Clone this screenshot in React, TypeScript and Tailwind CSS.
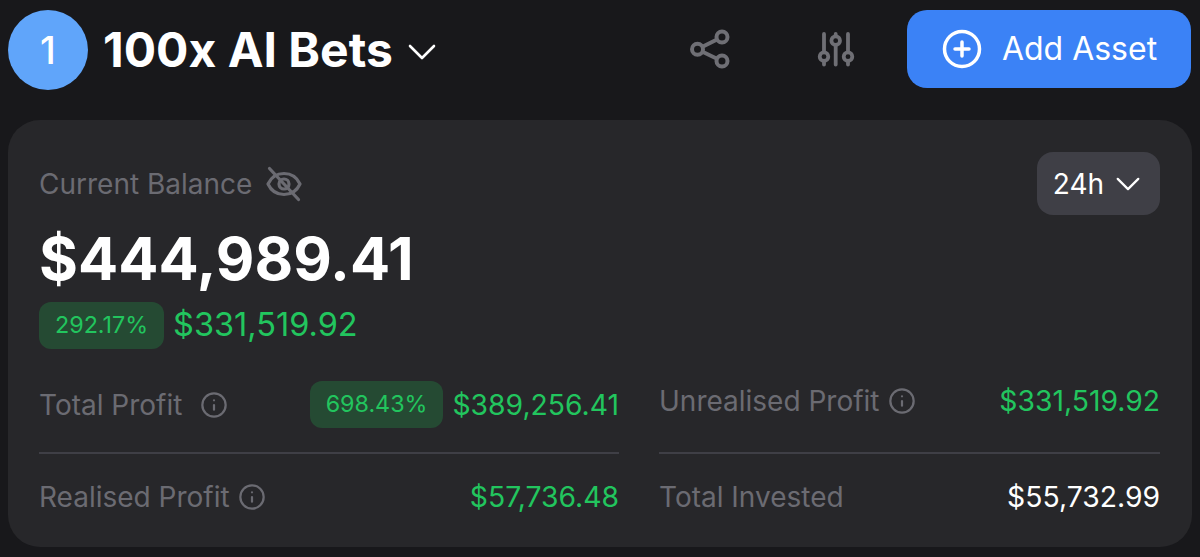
import { CirclePlus, Info } from "lucide-react";

const FONT = "font-['Inter',sans-serif]";

function Chevron({ className }: { className: string }) {
  return (
    <svg viewBox="0 0 28 16" fill="none" stroke="currentColor" strokeWidth={2.6} strokeLinecap="round" strokeLinejoin="round" className={className}>
      <path d="M2 2l12 12L26 2" />
    </svg>
  );
}

function ShareIcon() {
  return (
    <svg viewBox="0 0 44 44" fill="none" stroke="currentColor" strokeWidth={4} className="h-11 w-11 text-[#6f6f75]">
      <circle cx="34" cy="10" r="5.5" />
      <circle cx="9.5" cy="22.3" r="5.5" />
      <circle cx="34" cy="34" r="5.5" />
      <path d="M14.500 19.800l14.500-7.300M14.500 24.800l14.500 7" />
    </svg>
  );
}

function SlidersIcon() {
  return (
    <svg viewBox="0 0 44 44" fill="none" stroke="currentColor" strokeWidth={3.8} strokeLinecap="round" className="h-11 w-11 text-[#6f6f75]">
      <path d="M12 7v18M12 35v2.500M23.700 7v2M23.700 18.500v19M36 7v18M36 35v2.500" />
      <circle cx="12" cy="29.700" r="4.300" />
      <circle cx="23.700" cy="13.700" r="4.300" />
      <circle cx="36" cy="29.700" r="4.300" />
    </svg>
  );
}

function EyeSlash() {
  return (
    <svg viewBox="0 0 36 36" fill="none" stroke="currentColor" strokeWidth={3.2} strokeLinecap="round" strokeLinejoin="round" className="h-9 w-9">
      <path d="M2 18c3-6.500 8.500-10.500 16-10.500S31 11.500 34 18c-3 6.500-8.500 10.500-16 10.500S5 24.500 2 18z" />
      <circle cx="18" cy="18" r="5" />
      <path d="M3.500 2.500l29 31" />
    </svg>
  );
}

function Badge({ children }: { children: string }) {
  return (
    <span className="flex h-[47px] items-center rounded-xl bg-[#254a33] px-4 text-[23.300px] text-[#22c55e]">
      {children}
    </span>
  );
}

function StatRow({
  label,
  infoGap,
  value,
  valueClass,
  percent,
  className,
}: {
  label: string;
  infoGap?: string;
  value: string;
  valueClass: string;
  percent?: string;
  className: string;
}) {
  return (
    <div className={`flex items-center justify-between ${className}`}>
      <div className="flex items-center text-[28px] text-[#6b6b72]">
        <span>{label}</span>
        {infoGap && <Info className={`h-7 w-7 ${infoGap}`} strokeWidth={1.9} />}
      </div>
      <div className="flex items-center gap-[9px]">
        {percent && <Badge>{percent}</Badge>}
        <span className={`text-[28.300px] ${valueClass}`}>{value}</span>
      </div>
    </div>
  );
}

export default function App() {
  return (
    <div className={`h-[557px] w-[1200px] overflow-hidden bg-[#18181b] px-2 pt-2.5 ${FONT}`}>
      <div className="flex h-[80px] items-center justify-between">
        <div className="flex items-center">
          <div className="flex h-[80px] w-[80px] items-center justify-center rounded-full bg-[#60a5fa] text-[38px] font-medium text-white">
            1
          </div>
          <span className="ml-[15px] text-[48px] font-bold text-white">100x AI Bets</span>
          <Chevron className="ml-[15px] mt-1 h-4 w-7 text-white" />
        </div>
        <div className="flex items-center pb-0.5 pr-px">
          <ShareIcon />
          <div className="ml-[80px]">
            <SlidersIcon />
          </div>
          <button className="ml-[51px] flex h-[78px] w-[284px] items-center justify-center gap-[19px] rounded-[20px] bg-[#3b82f6] text-[32px] text-white">
            <CirclePlus className="h-[42px] w-[42px]" />
            Add Asset
          </button>
        </div>
      </div>
      <div className="mt-[30px] h-[427px] rounded-[32px] bg-[#27272a] pl-[31px] pr-[32px] pt-[32px]">
        <div className="flex h-[63px] items-center justify-between">
          <div className="flex items-center gap-[14px] text-[28px] text-[#6b6b72]">
            <span>Current Balance</span>
            <EyeSlash />
          </div>
          <div className="flex h-[63px] w-[123px] items-center justify-center gap-3 rounded-2xl bg-[#3f3f46] pr-1 text-[28px] text-white">
            24h
            <Chevron className="h-[14px] w-6" />
          </div>
        </div>
        <div className="mt-2 text-[59.500px] font-bold leading-[70px] text-white">$444,989.41</div>
        <div className="mt-2 flex items-center gap-[9px]">
          <Badge>292.17%</Badge>
          <span className="text-[32.500px] text-[#22c55e]">$331,519.92</span>
        </div>
        <div className="grid grid-cols-[580px_501px] gap-x-10">
          <StatRow label="Total Profit" infoGap="ml-[18px]" percent="698.43%" value="$389,256.41" valueClass="text-[#22c55e]" className="h-[104px] border-b-2 border-[#3f3f46] pt-2" />
          <StatRow label="Unrealised Profit" infoGap="ml-2" value="$331,519.92" valueClass="text-[#22c55e]" className="h-[104px] border-b-2 border-[#3f3f46]" />
          <StatRow label="Realised Profit" infoGap="ml-2" value="$57,736.48" valueClass="text-[#22c55e]" className="h-[87px]" />
          <StatRow label="Total Invested" value="$55,732.99" valueClass="text-white" className="h-[87px]" />
        </div>
      </div>
    </div>
  );
}
